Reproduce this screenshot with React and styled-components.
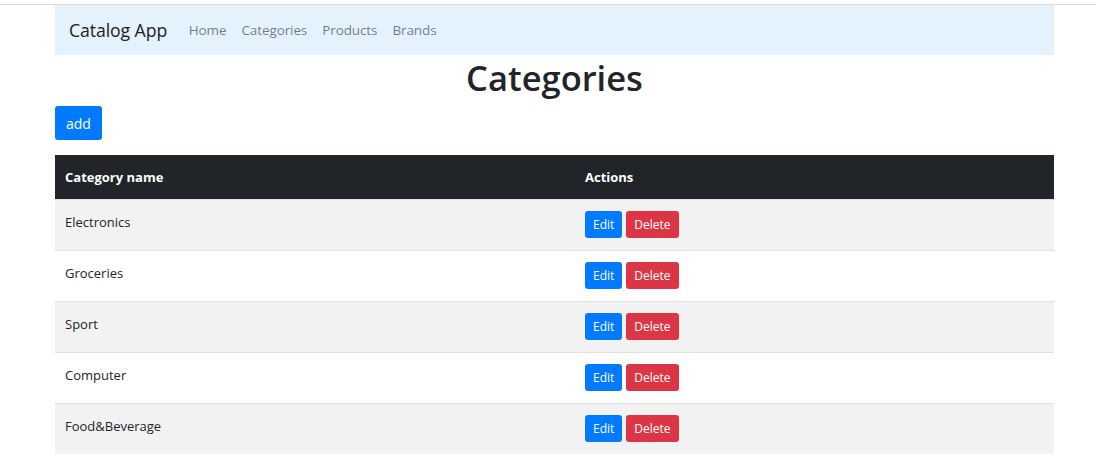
import React from "react";
import styled, { createGlobalStyle } from "styled-components";

const Global = createGlobalStyle`
  html, body { margin: 0; padding: 0; background: #fff; }
  body {
    font-family: "Open Sans", "Noto Sans", sans-serif;
    color: #212529;
  }
  * { box-sizing: border-box; }
`;

const TopRule = styled.div`
  height: 5px;
  border-bottom: 1px solid #d9d9d9;
`;

const Container = styled.div`
  width: 999px;
  margin-left: 55px;
`;

const Navbar = styled.nav`
  height: 50px;
  background: #e3f2fd;
  display: flex;
  align-items: center;
  padding: 0 14px;
`;

const Brand = styled.span`
  font-size: 17.7px;
  color: #222;
  margin-right: 14px;
  letter-spacing: -0.1px;
`;

const NavLink = styled.a`
  font-size: 13.5px;
  color: rgba(0, 0, 0, 0.5);
  padding: 0 7.5px;
  text-decoration: none;
  letter-spacing: -0.1px;
`;

const Title = styled.h1`
  margin: 0;
  text-align: center;
  font-size: 34.5px;
  font-weight: 600;
  line-height: 46px;
  color: #212529;
`;

const AddButton = styled.button`
  margin-top: 5px;
  height: 34px;
  padding: 0 11px;
  border: none;
  border-radius: 3px;
  background: #007bff;
  color: #fff;
  font-family: inherit;
  font-size: 14px;
`;

const Table = styled.table`
  width: 100%;
  margin-top: 15px;
  border-collapse: collapse;
  table-layout: fixed;
`;

const HeadCell = styled.th`
  background: #212529;
  color: #fff;
  text-align: left;
  font-size: 13px;
  font-weight: 700;
  height: 44px;
  padding: 0 10px;
  width: ${(p) => p.$w || "auto"};
`;

const Row = styled.tr`
  background: ${(p) => (p.$striped ? "#f2f2f2" : "#fff")};
  border-top: 1px solid #dee2e6;
`;

const Cell = styled.td`
  height: 51px;
  padding: 0 10px;
  font-size: 13px;
  vertical-align: middle;
`;

const NameText = styled.span`
  position: relative;
  top: -3px;
`;

const Actions = styled.div`
  display: flex;
  gap: 4px;
`;

const SmallButton = styled.button`
  height: 27px;
  padding: 0 8px;
  border: none;
  border-radius: 3px;
  background: ${(p) => (p.$danger ? "#dc3545" : "#007bff")};
  color: #fff;
  font-family: inherit;
  font-size: 12px;
`;

const categories = ["Electronics", "Groceries", "Sport", "Computer", "Food&Beverage"];

export default function App() {
  return (
    <>
      <Global />
      <TopRule />
      <Container>
        <Navbar>
          <Brand>Catalog App</Brand>
          <NavLink>Home</NavLink>
          <NavLink>Categories</NavLink>
          <NavLink>Products</NavLink>
          <NavLink>Brands</NavLink>
        </Navbar>
        <Title>Categories</Title>
        <AddButton>add</AddButton>
        <Table>
          <thead>
            <tr>
              <HeadCell $w="520px">Category name</HeadCell>
              <HeadCell>Actions</HeadCell>
            </tr>
          </thead>
          <tbody>
            {categories.map((c, i) => (
              <Row key={c} $striped={i % 2 === 0}>
                <Cell>
                  <NameText>{c}</NameText>
                </Cell>
                <Cell>
                  <Actions>
                    <SmallButton>Edit</SmallButton>
                    <SmallButton $danger>Delete</SmallButton>
                  </Actions>
                </Cell>
              </Row>
            ))}
          </tbody>
        </Table>
      </Container>
    </>
  );
}
